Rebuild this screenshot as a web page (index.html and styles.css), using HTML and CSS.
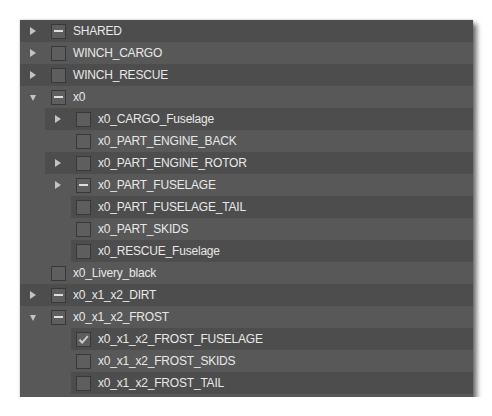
FILE: index.html
```html
<!DOCTYPE html>
<html>
<head>
<meta charset="utf-8">
<link rel="stylesheet" href="styles.css">
</head>
<body>
<div class="panel">
  <div class="row dark"><span class="arrow"><span class="tri-r"></span></span><span class="cb"><span class="dash"></span></span><span class="label">SHARED</span></div>
  <div class="row"><span class="arrow"><span class="tri-r"></span></span><span class="cb"></span><span class="label">WINCH_CARGO</span></div>
  <div class="row dark"><span class="arrow"><span class="tri-r"></span></span><span class="cb"></span><span class="label">WINCH_RESCUE</span></div>
  <div class="row"><span class="arrow"><span class="tri-d"></span></span><span class="cb"><span class="dash"></span></span><span class="label">x0</span></div>
  <div class="row dark l2"><span class="arrow"><span class="tri-r"></span></span><span class="cb"></span><span class="label">x0_CARGO_Fuselage</span></div>
  <div class="row l2 leaf"><span class="cb"></span><span class="label">x0_PART_ENGINE_BACK</span></div>
  <div class="row dark l2"><span class="arrow"><span class="tri-r"></span></span><span class="cb"></span><span class="label">x0_PART_ENGINE_ROTOR</span></div>
  <div class="row l2"><span class="arrow"><span class="tri-r"></span></span><span class="cb"><span class="dash"></span></span><span class="label">x0_PART_FUSELAGE</span></div>
  <div class="row dark l2 leaf"><span class="cb"></span><span class="label">x0_PART_FUSELAGE_TAIL</span></div>
  <div class="row l2 leaf"><span class="cb"></span><span class="label">x0_PART_SKIDS</span></div>
  <div class="row dark l2 leaf"><span class="cb"></span><span class="label">x0_RESCUE_Fuselage</span></div>
  <div class="row leaf"><span class="cb"></span><span class="label">x0_Livery_black</span></div>
  <div class="row dark"><span class="arrow"><span class="tri-r"></span></span><span class="cb"><span class="dash"></span></span><span class="label">x0_x1_x2_DIRT</span></div>
  <div class="row"><span class="arrow"><span class="tri-d"></span></span><span class="cb"><span class="dash"></span></span><span class="label">x0_x1_x2_FROST</span></div>
  <div class="row dark l2 leaf"><span class="cb"><svg class="check" width="13" height="13" viewBox="0 0 13 13"><path d="M2.5 6.8 L5.2 9.6 L10.8 3.2" fill="none" stroke="#cccccc" stroke-width="2"/></svg></span><span class="label">x0_x1_x2_FROST_FUSELAGE</span></div>
  <div class="row l2 leaf"><span class="cb"></span><span class="label">x0_x1_x2_FROST_SKIDS</span></div>
  <div class="row dark l2 leaf"><span class="cb"></span><span class="label">x0_x1_x2_FROST_TAIL</span></div>
</div>
</body>
</html>
```

FILE: styles.css
```css
html, body {
  margin: 0;
  padding: 0;
  background: #ffffff;
}
.panel {
  margin: 20px 0 0 20px;
  width: 453px;
  padding-bottom: 3px;
  background: #585858;
  box-shadow: 4px 4px 5px rgba(0, 0, 0, 0.55), 0 0 2px rgba(0, 0, 0, 0.25);
  font-family: "Liberation Sans", Arial, sans-serif;
  font-size: 12px;
  letter-spacing: -0.2px;
  color: #e8e8e8;
}
.row {
  height: 22px;
  display: flex;
  align-items: center;
}
.row.dark {
  background: #4d4d4d;
}
.row.l2 {
  margin-left: 25px;
}
.row.leaf {
  padding-left: 26px;
}
.row.l2.leaf {
  padding-left: 0;
  margin-left: 51px;
}
.arrow {
  width: 26px;
  height: 22px;
  flex: none;
  position: relative;
}
.tri-r {
  position: absolute;
  left: 10px;
  top: 7px;
  width: 0;
  height: 0;
  border-top: 4px solid transparent;
  border-bottom: 4px solid transparent;
  border-left: 6px solid #c4c4c4;
}
.tri-d {
  position: absolute;
  left: 10px;
  top: 9px;
  width: 0;
  height: 0;
  border-left: 3.5px solid transparent;
  border-right: 3.5px solid transparent;
  border-top: 6px solid #c4c4c4;
}
.cb {
  width: 13px;
  height: 13px;
  flex: none;
  margin-left: 5px;
  border: 1px solid #383838;
  background: #5e5e5e;
  display: flex;
  align-items: center;
  justify-content: center;
}
.dash {
  width: 9px;
  height: 2px;
  background: #dedede;
}
.check {
  display: block;
}
.label {
  margin-left: 7px;
  white-space: nowrap;
}
```
